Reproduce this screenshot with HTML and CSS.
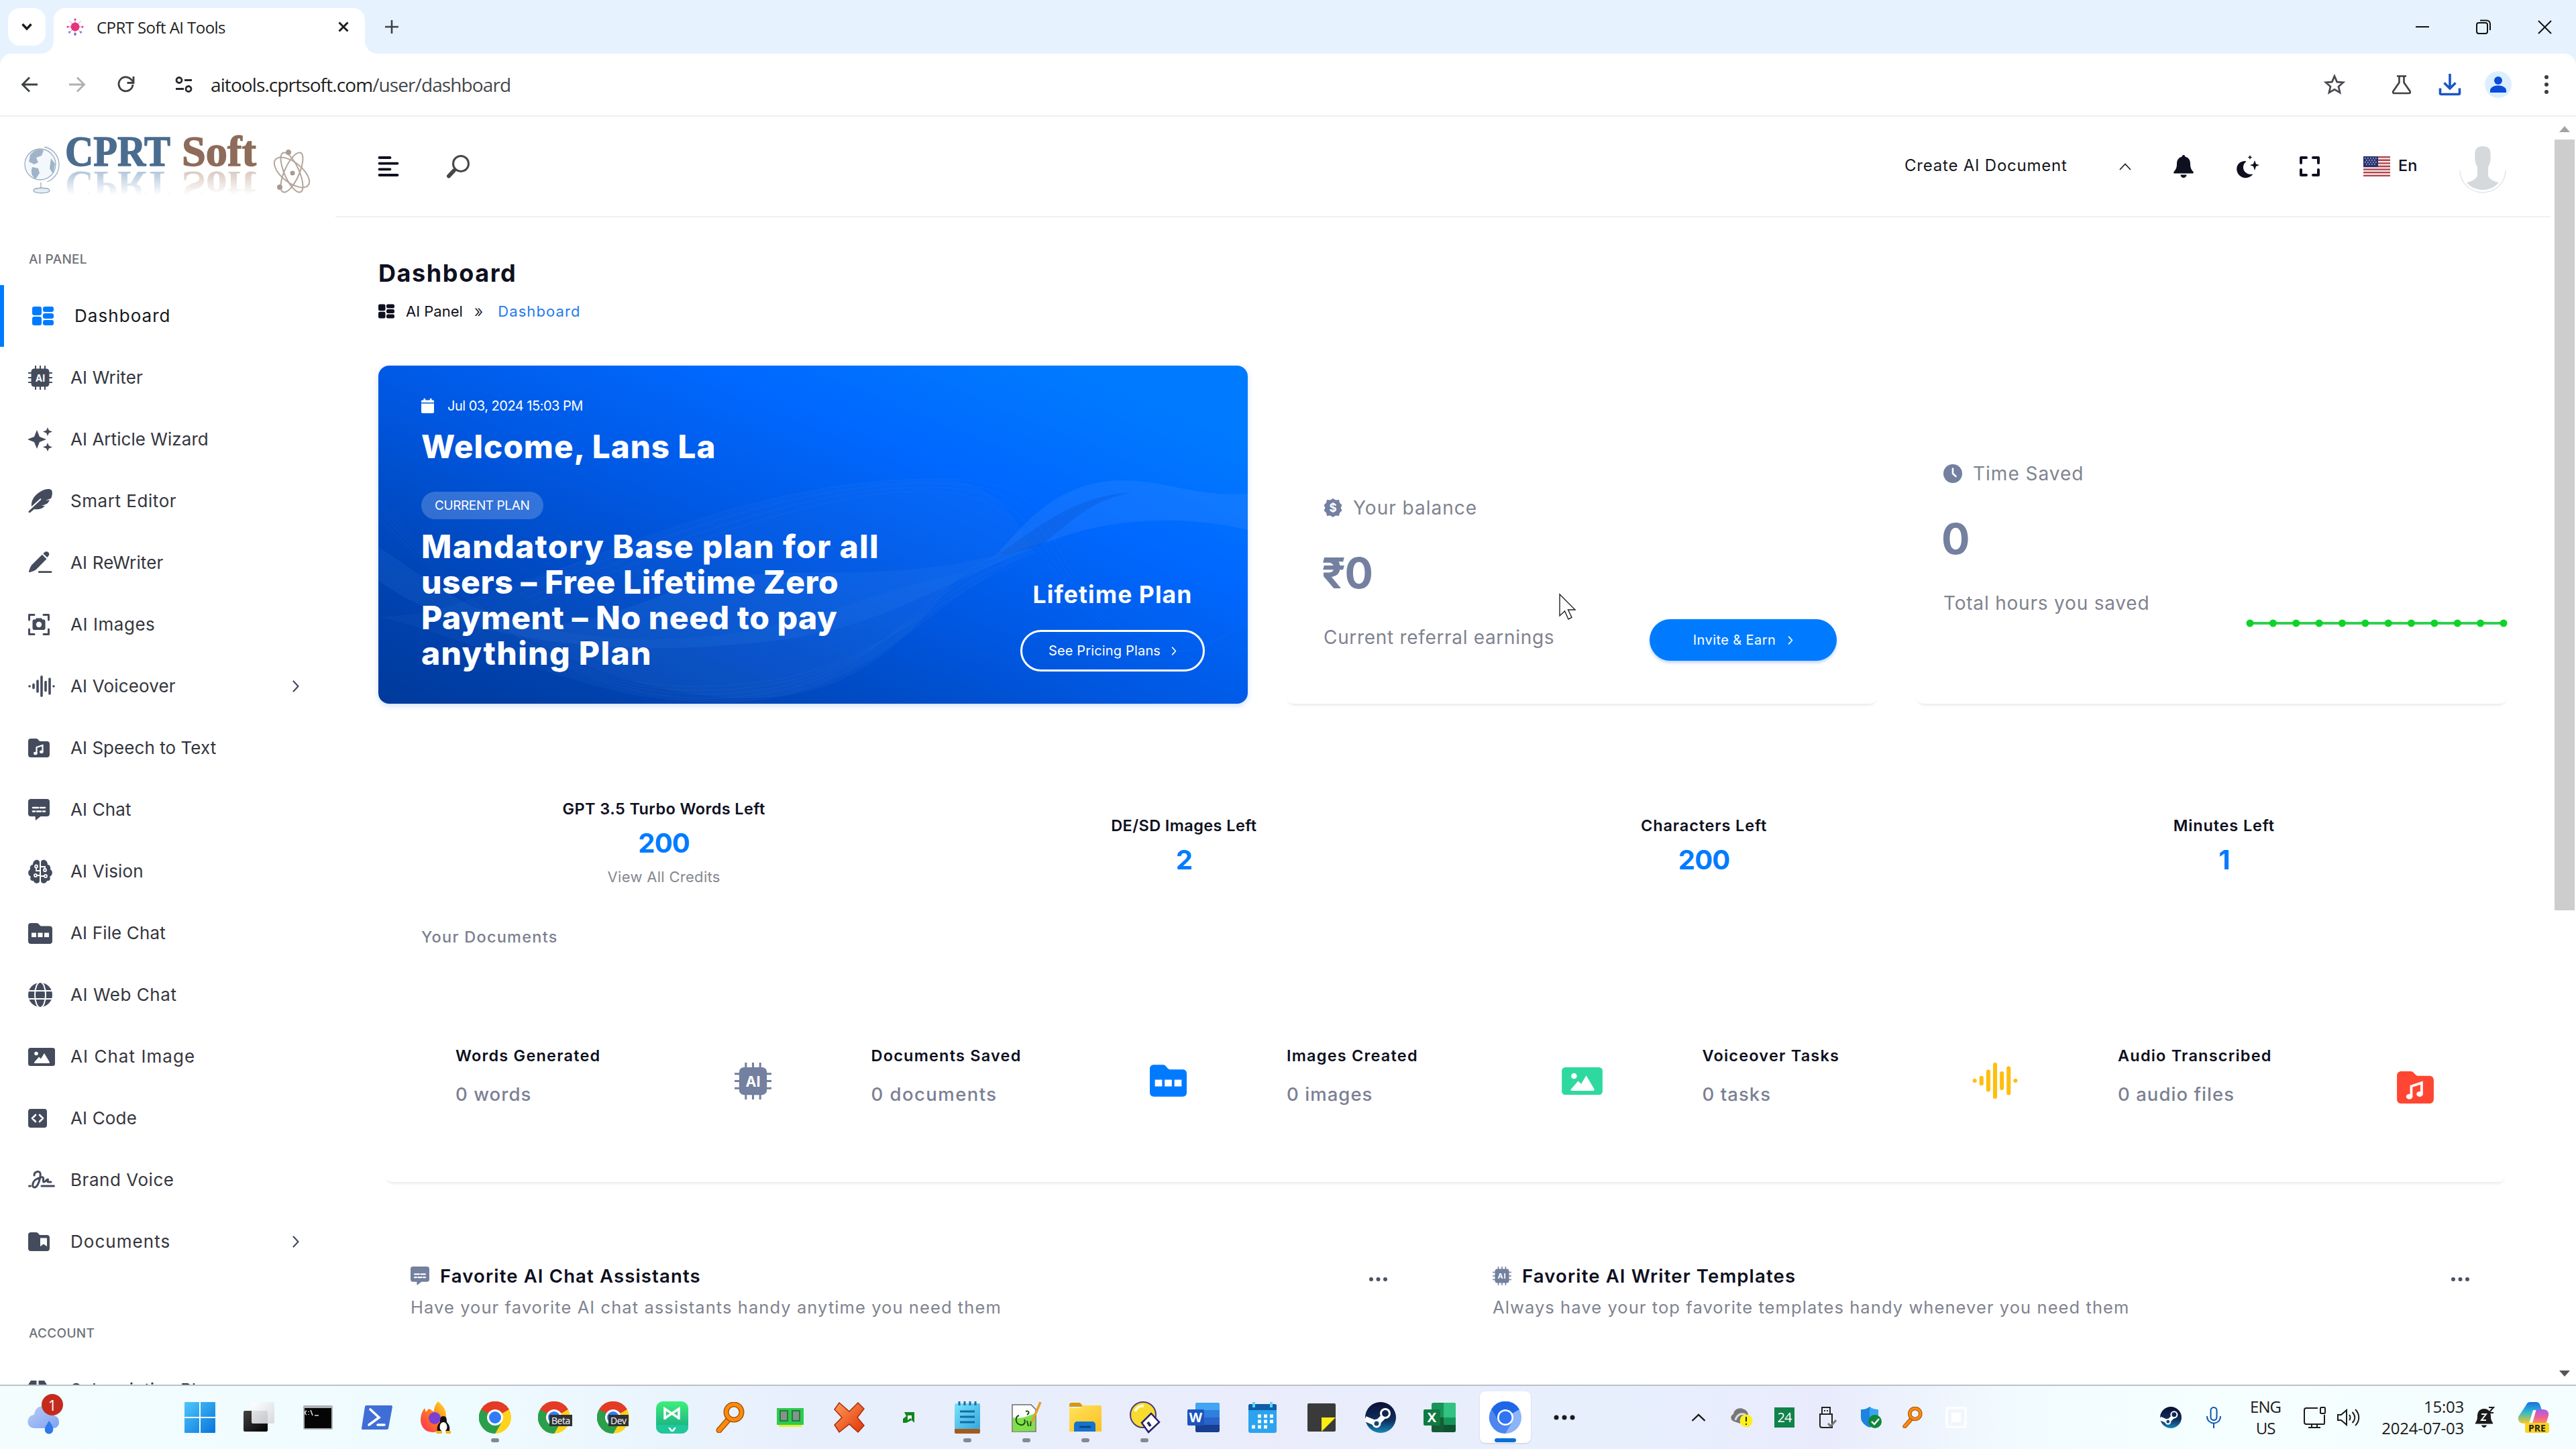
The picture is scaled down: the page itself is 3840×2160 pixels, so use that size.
FILE: index.html
```html
<!DOCTYPE html>
<html lang="en">
<head>
<meta charset="utf-8">
<title>CPRT Soft AI Tools</title>
<link rel="stylesheet" href="styles.css">
</head>
<body>
<svg class="sprite" aria-hidden="true">
  <defs>
    <linearGradient id="g-weather" x1="0" y1="0" x2="1" y2="1"><stop offset="0" stop-color="#b9cdf8"/><stop offset="1" stop-color="#7ea3f0"/></linearGradient>
    <linearGradient id="g-win" x1="0" y1="0" x2="1" y2="1"><stop offset="0" stop-color="#4fc8fb"/><stop offset="1" stop-color="#0673dc"/></linearGradient>
    <linearGradient id="g-black" x1="0" y1="0" x2="1" y2="1"><stop offset="0" stop-color="#444"/><stop offset="1" stop-color="#000"/></linearGradient>
    <linearGradient id="g-grey" x1="0" y1="0" x2="1" y2="1"><stop offset="0" stop-color="#fff"/><stop offset="1" stop-color="#d4d6da"/></linearGradient>
    <linearGradient id="g-fox" x1="1" y1="0" x2="0" y2="1"><stop offset="0" stop-color="#ffe226"/><stop offset=".5" stop-color="#ff7a1c"/><stop offset="1" stop-color="#ff2a5f"/></linearGradient>
    <linearGradient id="g-green" x1="0" y1="0" x2="0" y2="1"><stop offset="0" stop-color="#3df07a"/><stop offset="1" stop-color="#12a386"/></linearGradient>
    <linearGradient id="g-note" x1="0" y1="0" x2="1" y2="1"><stop offset="0" stop-color="#7be3fb"/><stop offset="1" stop-color="#35a6dd"/></linearGradient>
    <linearGradient id="g-folder" x1="0" y1="0" x2="1" y2="1"><stop offset="0" stop-color="#ffe35a"/><stop offset="1" stop-color="#fbc024"/></linearGradient>
    <linearGradient id="g-steam" x1="0" y1="0" x2="0" y2="1"><stop offset="0" stop-color="#0a0f33"/><stop offset=".6" stop-color="#0f2f60"/><stop offset="1" stop-color="#1588b8"/></linearGradient>
    <linearGradient id="g-red" x1="0" y1="0" x2="1" y2="1"><stop offset="0" stop-color="#ff9a55"/><stop offset="1" stop-color="#e03508"/></linearGradient>
    <linearGradient id="g-cop1" x1="0" y1="0" x2="0" y2="1"><stop offset="0" stop-color="#1a6fe0"/><stop offset=".45" stop-color="#2bb7d0"/><stop offset="1" stop-color="#f5c928"/></linearGradient>
    <linearGradient id="g-cop2" x1="0" y1="0" x2="0" y2="1"><stop offset="0" stop-color="#a55bf0"/><stop offset=".5" stop-color="#ef5f95"/><stop offset="1" stop-color="#ff9a4d"/></linearGradient>
    <linearGradient id="g-fade" x1="0" y1="0" x2="0" y2="1"><stop offset="0" stop-color="#fff" stop-opacity=".55"/><stop offset="1" stop-color="#fff" stop-opacity="0"/></linearGradient>
    <mask id="m-fade"><rect x="80" y="80" width="320" height="37" fill="url(#g-fade)"/></mask>
  </defs>
  <symbol id="i-grid" viewBox="0 0 32 28"><rect width="14" height="13" rx="3"/><rect y="15" width="14" height="13" rx="3"/><rect x="16" width="16" height="8" rx="3"/><rect x="16" y="10" width="16" height="8" rx="3"/><rect x="16" y="20" width="16" height="8" rx="3"/></symbol>
  <symbol id="i-chip" viewBox="0 0 36 36"><rect x="4.500" y="4.500" width="27" height="27" rx="4.500"/><path d="M11 0v36M18 0v36M25 0v36M0 11h36M0 18h36M0 25h36" stroke="currentColor" stroke-width="2" stroke-linecap="round"/><text x="18" y="23.500" text-anchor="middle" class="chip-text">AI</text></symbol>
  <symbol id="i-spark" viewBox="0 0 36 36"><path d="M13 4l4 10 10 4-10 4-4 10-4-10-10-4 10-4zM29 0l1.900 4.600L36 6.500l-5.100 1.900L29 13l-1.900-4.600L22 6.500l5.100-1.900zM29 23l1.900 4.600L36 29.500l-5.100 1.900L29 36l-1.900-4.600L22 29.500l5.100-1.900z"/></symbol>
  <symbol id="i-feather" viewBox="0 0 36 36"><path d="M5 26C4 16 10 9 18 4c6-4 13-5 16-3 3 2 2 9 0 13l-8 3 6-.5c-1 2-2.500 4-4 5.500l-8 3 5 .0c-4 5-12 6-16 5l-6 5c-1.500 1-3.500-.5-2-2.300L19 16c1-1.500-.5-2.300-1.500-1.300z"/></symbol>
  <symbol id="i-pen" viewBox="0 0 36 36"><path d="M21 5l7 7L12 28c-2 2-7 4-11 5-1 0-1-.5-1-1 1-4 3-9 5-11zM22.500 3.500l2-2c2-2 5-1.500 6.500 0s1.500 4 0 5.500l-2 2.500zM15 31h20a1 1 0 0 1 0 3H15z"/></symbol>
  <symbol id="i-camera" viewBox="0 0 32 32"><path d="M1.500 9V1.500H9M23 1.500h7.500V9M30.500 23v7.500H23M9 30.500H1.500V23" fill="none" stroke="currentColor" stroke-width="3" stroke-linecap="round" stroke-linejoin="round"/><path d="M6.500 11c0-1.700 1-2.500 2.500-2.500h2l1-2h8l1 2h2c1.500 0 2.500.8 2.500 2.500v10.500c0 1.500-1 2.500-2.500 2.500H9c-1.500 0-2.500-1-2.500-2.500z"/><circle cx="16" cy="16" r="4.200" fill="#fff"/></symbol>
  <symbol id="i-wave" viewBox="0 0 40 32"><path d="M2 16h0M8 13.500v5M14 8v16M20 1.800v28.400M26 9.500v13M32 5v22M38 16h0" fill="none" stroke="currentColor" stroke-width="3.600" stroke-linecap="round"/></symbol>
  <symbol id="i-music" viewBox="0 0 32 28"><path d="M0 4c0-2.500 1.500-4 4-4h8c3 0 4 4 6 4h10c2.500 0 4 1.500 4 4v16c0 2.500-1.500 4-4 4H4c-2.500 0-4-1.500-4-4z"/><path d="M12.500 22v-9l9-3v9.500" fill="none" stroke="#fff" stroke-width="2.200"/><ellipse cx="10.800" cy="22" rx="2.800" ry="2.300" fill="#fff"/><ellipse cx="19.800" cy="19.800" rx="2.800" ry="2.300" fill="#fff"/></symbol>
  <symbol id="i-chat" viewBox="0 0 32 32"><path d="M0 4c0-2.500 1.500-4 4-4h24c2.500 0 4 1.500 4 4v18c0 2.500-1.500 4-4 4h-9.500L11 32l-.5-6H4c-2.500 0-4-1.500-4-4z"/><path d="M7 13h8M18 13h7M7 18.500h3M13 18.500h6M22 18.500h3" stroke="#fff" stroke-width="2.600" stroke-linecap="round"/></symbol>
  <symbol id="i-brain" viewBox="0 0 36 36"><path d="M17 4v28c0 5-8 5-9 0-4 1-6-3-4-6-5-2-5-9-1-11-1-4 1-7 4-7 0-9 10-9 10-4zM19 4v28c0 5 8 5 9 0 4 1 6-3 4-6 5-2 5-9 1-11 1-4-1-7-4-7 0-9-10-9-10-4z"/><path d="M17 17h-5v-4M17 24h-5M19 11h6v3M19 25h5" fill="none" stroke="#fff" stroke-width="1.800"/><g fill="none" stroke="#fff" stroke-width="1.800"><circle cx="12" cy="10.500" r="2"/><circle cx="11" cy="24" r="2"/><circle cx="25" cy="16" r="2"/><circle cx="26" cy="25" r="2"/></g></symbol>
  <symbol id="i-files" viewBox="0 0 36 31"><path d="M0 4c0-2.500 1.500-4 4-4h9c3 0 4 4.500 6.500 4.500H32c2.500 0 4 1.500 4 4V27c0 2.500-1.500 4-4 4H4c-2.500 0-4-1.500-4-4z"/><path d="M5 14.500h7v6.500H5zM14.500 14.500h7v6.500h-7zM24 14.500h7v6.500h-7z" fill="#fff"/></symbol>
  <symbol id="i-globe" viewBox="0 0 36 36"><circle cx="18" cy="18" r="18"/><path d="M0 12h36M0 24h36" stroke="#fff" stroke-width="2"/><ellipse cx="18" cy="18" rx="8" ry="19" fill="none" stroke="#fff" stroke-width="2"/></symbol>
  <symbol id="i-image" viewBox="0 0 40 27"><rect width="40" height="27" rx="3.500"/><circle cx="12" cy="8.500" r="2.800" fill="#fff"/><path d="M9 21.500l7-8 3 2.800L24 8l8 13.500c0 1-.5 1.500-1.500 1.500H10c-1 0-1.500-.8-1-1.500z" fill="#fff"/></symbol>
  <symbol id="i-code" viewBox="0 0 28 28"><rect width="28" height="28" rx="4"/><path d="M11 9l-5 5 5 5M17 9l5 5-5 5" fill="none" stroke="#fff" stroke-width="2.600" stroke-linecap="round" stroke-linejoin="round"/></symbol>
  <symbol id="i-sign" viewBox="0 0 40 28"><path d="M1.500 23h2M9 7c0-6 8-7 9-3 1 5-3 20-8 21-5 1-4-9 2-12 4-2 8-4 10-3 2 1-1 6 1 7s4-4 6-4-2 4 1 4h4M20 23h18.500" fill="none" stroke="currentColor" stroke-width="3" stroke-linecap="round" stroke-linejoin="round"/></symbol>
  <symbol id="i-docs" viewBox="0 0 32 28"><path d="M0 4c0-2.500 1.500-4 4-4h8c3 0 4 4 6 4h10c2.500 0 4 1.500 4 4v16c0 2.500-1.500 4-4 4H4c-2.500 0-4-1.500-4-4z"/><path d="M18 8.500h10V21l-5-3.500-5 3.500z" fill="#fff"/></symbol>
  <symbol id="i-right" viewBox="0 0 10 18"><path d="M1.500 1.500L8.500 9l-7 7.500" fill="none" stroke="currentColor" stroke-width="2.200" stroke-linecap="round" stroke-linejoin="round"/></symbol>
  <symbol id="i-mag" viewBox="0 0 46 46"><path d="M19 26L5 42" stroke="#a85508" stroke-width="9" stroke-linecap="round"/><path d="M19 26L5 42" stroke="#ff8a0c" stroke-width="6" stroke-linecap="round"/><circle cx="27" cy="15" r="11.500" fill="none" stroke="#a85508" stroke-width="8"/><circle cx="27" cy="15" r="11.500" fill="none" stroke="#ff8a0c" stroke-width="5"/></symbol>
  <symbol id="i-chrome" viewBox="0 0 48 48"><circle cx="24" cy="24" r="24" fill="#ffd21c"/><path d="M24 24L3.200 12A24 24 0 0 1 44.800 12z" fill="#e33b26"/><path d="M24 12h20.800A24 24 0 0 0 3.200 12L14 30z" fill="#e33b26"/><path d="M3.200 12A24 24 0 0 0 24 48l10.400-18L24 24z" fill="#2a9f4b"/><path d="M3.200 12L14 30a12 12 0 0 0 20 0L24 48A24 24 0 0 1 3.200 12z" fill="#2a9f4b"/><circle cx="24" cy="24" r="12" fill="#fff"/><circle cx="24" cy="24" r="9" fill="#2f7cf6"/></symbol>
  <symbol id="i-steam" viewBox="0 0 46 46"><circle cx="23" cy="23" r="23" fill="url(#g-steam)"/><path d="M0 25l17 7 12-12" fill="none" stroke="#fff" stroke-width="8"/><circle cx="30" cy="17" r="8" fill="#fff"/><circle cx="30" cy="17" r="5" fill="#0f2850"/><circle cx="17" cy="32" r="6.500" fill="#fff"/><circle cx="17" cy="32" r="3.500" fill="#17457a"/></symbol>
</svg>

<header class="browser">
  <div class="tabstrip">
    <div class="tab-search"><svg width="18" height="12" viewBox="0 0 18 12"><path d="M2.500 2L9 9l6.500-7" fill="none" stroke="#1c1c1c" stroke-width="3.400"/></svg></div>
    <div class="tab">
      <svg width="26" height="26" viewBox="0 0 26 26"><g stroke="#ee7dba" stroke-width="1"><path d="M13 1v24M1 13h24M4.500 4.500l17 17M21.500 4.500l-17 17"/></g><g fill="#e2367f"><circle cx="13" cy="13" r="6.500"/><circle cx="13" cy="2" r="1.500"/><circle cx="2" cy="13" r="1.500"/><circle cx="24" cy="13" r="1.500"/></g><circle cx="13" cy="24" r="2" fill="#7f6de0"/><circle cx="4.500" cy="21" r="1.700" fill="#a070e0"/><circle cx="21.500" cy="21" r="1.700" fill="#a070e0"/></svg>
      <span class="tab-title">CPRT Soft AI Tools</span>
      <svg class="tab-close" width="16" height="16" viewBox="0 0 16 16"><path d="M1.500 1.500l13 13M14.500 1.500l-13 13" stroke="#1c1c1c" stroke-width="3"/></svg>
    </div>
    <svg class="tab-new" width="22" height="22" viewBox="0 0 22 22"><path d="M11 1v20M1 11h20" stroke="#3c4043" stroke-width="2.600"/></svg>
    <div class="win-buttons">
      <svg width="20" height="20" viewBox="0 0 20 20"><path d="M0 10h20" stroke="#111" stroke-width="2"/></svg>
      <svg width="22" height="22" viewBox="0 0 22 22"><rect x="1" y="5" width="16" height="16" rx="3" fill="none" stroke="#111" stroke-width="2"/><path d="M6 1.500h10a5 5 0 0 1 5 5V16" fill="none" stroke="#111" stroke-width="2"/></svg>
      <svg width="21" height="21" viewBox="0 0 21 21"><path d="M1 1l19 19M20 1L1 20" stroke="#111" stroke-width="2"/></svg>
    </div>
  </div>
  <div class="toolbar">
    <svg class="tb-back" width="24" height="24" viewBox="0 0 24 24"><path d="M24 12H2M12 1.500L1.500 12 12 22.500" fill="none" stroke="#3c4043" stroke-width="2.800"/></svg>
    <svg class="tb-fwd" width="24" height="24" viewBox="0 0 24 24"><path d="M0 12h22M12 1.500L22.500 12 12 22.500" fill="none" stroke="#adb0b3" stroke-width="2.800"/></svg>
    <svg class="tb-reload" width="26" height="26" viewBox="0 0 26 26"><path d="M23 13a10.500 10.500 0 1 1-3-8l4 4" fill="none" stroke="#3c4043" stroke-width="2.800"/><path d="M24 1v9.500h-9.500" fill="none" stroke="#3c4043" stroke-width="2.800"/></svg>
    <svg class="tb-tune" width="26" height="26" viewBox="0 0 26 26"><g fill="none" stroke="#26282b" stroke-width="2.800"><circle cx="6" cy="6.500" r="4"/><circle cx="20" cy="19.500" r="4"/><path d="M14 6.500h11M1 19.500h12"/></g></svg>
    <span class="url">aitools.cprtsoft.com<span class="url-path">/user/dashboard</span></span>
    <div class="tb-right">
      <svg class="tb-star" width="32" height="32" viewBox="0 0 32 32"><path d="M16 3.500l3.700 8.600 9.300.8-7 6.100 2.100 9.100L16 23.300l-8.100 4.800L10 19l-7-6.100 9.300-.8z" fill="none" stroke="#46494d" stroke-width="2.700"/></svg>
      <svg class="tb-flask" width="30" height="30" viewBox="0 0 30 30"><path d="M8 2.500h14M11.500 3v9L2.500 25c-1 2 0 3 1.500 3h22c1.500 0 2.500-1 1.500-3l-9-13V3" fill="none" stroke="#3c4043" stroke-width="2.600"/></svg>
      <svg class="tb-down" width="32" height="32" viewBox="0 0 32 32"><path d="M16 0v21M7.500 13.500l8.500 8.500 8.500-8.500M1.500 21.500V29c0 1 .5 1.500 1.500 1.500h26c1 0 1.500-.5 1.500-1.500v-7.500" fill="none" stroke="#1a56c4" stroke-width="3.600"/></svg>
      <svg class="tb-user" width="40" height="40" viewBox="0 0 40 40"><circle cx="20" cy="20" r="20" fill="#dcefff"/><circle cx="20" cy="14" r="6" fill="#0b4cdb"/><path d="M8 32v-3c0-10 24-10 24 0v3z" fill="#0b4cdb"/></svg>
      <svg class="tb-dots" width="6" height="28" viewBox="0 0 6 28"><g fill="#3c4043"><circle cx="3" cy="3" r="3"/><circle cx="3" cy="14" r="3"/><circle cx="3" cy="25" r="3"/></g></svg>
    </div>
  </div>
</header>

<div class="page">
  <aside class="sidebar">
    <svg class="logo" width="500" height="148" viewBox="0 0 500 148">
      <g fill="none" stroke="#9aadc2" stroke-width="1.300"><circle cx="60" cy="71" r="23" fill="#f3f8fc"/><path d="M66 45a27 27 0 0 1 4 52"/><path d="M61 98v9M50 110c0-5 24-5 24 0s-24 5-24 0z" fill="#e6edf3"/></g>
      <path d="M45 57c6-8 14-10 20-7l-3 8-8 3 3 7-6 3-8-4zM48 75l9 2 2 7-6 9c-5-4-8-10-5-18zM76 62l6 8-3 15-5-8z" fill="#9fb3c9"/>
      <g class="logo-text"><text x="97" y="73" textLength="157" lengthAdjust="spacingAndGlyphs" fill="#4a6c8f" stroke="#4a6c8f">CPRT</text><text x="271" y="73" textLength="111" lengthAdjust="spacingAndGlyphs" fill="#8e6b5a" stroke="#8e6b5a">Soft</text></g>
      <g mask="url(#m-fade)"><g class="logo-text" transform="translate(0 156) scale(1 -1)"><text x="97" y="74" textLength="157" lengthAdjust="spacingAndGlyphs" fill="#6f94ba">CPRT</text><text x="271" y="74" textLength="111" lengthAdjust="spacingAndGlyphs" fill="#b99a8a">Soft</text></g></g>
      <g fill="none" stroke="#b3a59c" stroke-width="2"><ellipse cx="435" cy="83" rx="11" ry="32" transform="rotate(24 435 83)"/><ellipse cx="435" cy="83" rx="11" ry="32" transform="rotate(-24 435 83)"/><ellipse cx="435" cy="83" rx="31" ry="15" transform="rotate(38 435 83)"/></g>
      <g fill="#a79a92"><circle cx="436" cy="84" r="3.500"/><circle cx="430" cy="53" r="4"/><circle cx="417" cy="105" r="4"/></g>
    </svg>
    <nav class="nav">
      <h2 class="nav-label">AI PANEL</h2>
      <a class="nav-item is-active"><svg class="nav-icon" width="32" height="28"><use href="#i-grid"/></svg><span class="wide">Dashboard</span></a>
      <a class="nav-item"><svg class="nav-icon" width="36" height="36"><use href="#i-chip"/></svg><span>AI Writer</span></a>
      <a class="nav-item"><svg class="nav-icon" width="36" height="36"><use href="#i-spark"/></svg><span class="tight">AI Article Wizard</span></a>
      <a class="nav-item"><svg class="nav-icon" width="36" height="36"><use href="#i-feather"/></svg><span class="mid">Smart Editor</span></a>
      <a class="nav-item"><svg class="nav-icon" width="36" height="34"><use href="#i-pen"/></svg><span>AI ReWriter</span></a>
      <a class="nav-item"><svg class="nav-icon" width="32" height="32"><use href="#i-camera"/></svg><span class="mid">AI Images</span></a>
      <a class="nav-item"><svg class="nav-icon" width="40" height="32"><use href="#i-wave"/></svg><span>AI Voiceover</span><svg class="nav-more" width="10" height="18"><use href="#i-right"/></svg></a>
      <a class="nav-item"><svg class="nav-icon" width="32" height="28"><use href="#i-music"/></svg><span class="tight">AI Speech to Text</span></a>
      <a class="nav-item"><svg class="nav-icon" width="32" height="32"><use href="#i-chat"/></svg><span>AI Chat</span></a>
      <a class="nav-item"><svg class="nav-icon" width="36" height="36"><use href="#i-brain"/></svg><span>AI Vision</span></a>
      <a class="nav-item"><svg class="nav-icon" width="36" height="31"><use href="#i-files"/></svg><span>AI File Chat</span></a>
      <a class="nav-item"><svg class="nav-icon" width="36" height="36"><use href="#i-globe"/></svg><span class="mid">AI Web Chat</span></a>
      <a class="nav-item"><svg class="nav-icon" width="40" height="27"><use href="#i-image"/></svg><span class="wide">AI Chat Image</span></a>
      <a class="nav-item"><svg class="nav-icon" width="28" height="28"><use href="#i-code"/></svg><span>AI Code</span></a>
      <a class="nav-item"><svg class="nav-icon" width="40" height="28"><use href="#i-sign"/></svg><span class="mid">Brand Voice</span></a>
      <a class="nav-item"><svg class="nav-icon" width="32" height="28"><use href="#i-docs"/></svg><span class="wide">Documents</span><svg class="nav-more" width="10" height="18"><use href="#i-right"/></svg></a>
      <h2 class="nav-label nav-label-next">ACCOUNT</h2>
      <a class="nav-item"><svg class="nav-icon" width="28" height="28" viewBox="0 0 28 28"><path d="M4 0h8.500v28H0V6zM15.500 0H24l4 6v22H15.500z"/></svg><span>Subscription Plans</span></a>
    </nav>
  </aside>

  <main class="main">
    <div class="topbar">
      <svg class="burger" width="30" height="30" viewBox="0 0 30 30"><path d="M1.500 2h16M1.500 10.600h27M1.500 19.300h16M1.500 28h27" stroke="#0e1020" stroke-width="3.800" stroke-linecap="round"/></svg>
      <svg class="search" width="36" height="35" viewBox="0 0 36 35"><circle cx="22" cy="13" r="11.500" fill="none" stroke="#474747" stroke-width="3"/><path d="M13.500 21.500l-2 2" stroke="#474747" stroke-width="3"/><path d="M11.500 23.500L4 31.500" stroke="#474747" stroke-width="6" stroke-linecap="round"/></svg>
      <div class="topbar-right">
        <div class="create"><span>Create AI Document</span><svg width="18" height="11" viewBox="0 0 18 11"><path d="M1 10l8-8.500L17 10" fill="none" stroke="#222" stroke-width="1.800"/></svg></div>
        <svg class="bell" width="30" height="34" viewBox="0 0 30 34"><path d="M15 0c1.500 0 2.300 1 2.300 2.500C23 4 25 8 25 13c0 6 1.500 8.500 4 11.500 1.500 1.600.8 3-1 3H2c-1.800 0-2.500-1.400-1-3C3.500 21.500 5 19 5 13 5 8 7 4 12.700 2.500 12.700 1 13.500 0 15 0zM10.500 29.500h9c0 2.500-2 4.500-4.500 4.500s-4.500-2-4.500-4.500z" fill="#0e1020"/></svg>
        <svg class="moon" width="34" height="34" viewBox="0 0 34 34"><path d="M13 9C4 9-1 16 .5 23.500S9 35 15.500 34c4-.6 7-2.600 9-5.500-8 1.500-14-3-14.500-9.500-.2-4 1.500-7 4.500-9.300z" fill="#0e1020"/><path d="M27 8l2 5.500L34 15l-5 2-2 6-2-6-5-2 5-1.500zM20 0l1 2.500 2.500 1L21 4.500 20 7l-1-2.500-2.500-1 2.500-1z" fill="#0e1020"/></svg>
        <svg class="expand" width="30" height="30" viewBox="0 0 30 30"><path d="M2 10V2h8M20 2h8v8M28 20v8h-8M10 28H2v-8" fill="none" stroke="#0e1020" stroke-width="4" stroke-linecap="round" stroke-linejoin="round"/></svg>
        <svg class="flag" width="40" height="30" viewBox="0 0 40 30"><rect width="40" height="30" fill="#f6ecec"/><path d="M0 1.150h40M0 5.770h40M0 10.400h40M0 15h40M0 19.600h40M0 24.200h40M0 28.850h40" stroke="#b0434a" stroke-width="2.310"/><rect width="22" height="16" fill="#27326f"/><g fill="#cfd5ee"><path d="M2 2h1.500v1.500H2zM6 2h1.500v1.500H6zM10 2h1.500v1.500H10zM14 2h1.500v1.500H14zM18 2h1.500v1.500H18zM4 5h1.500v1.500H4zM8 5h1.500v1.500H8zM12 5h1.500v1.500H12zM16 5h1.500v1.500H16zM2 8h1.500v1.500H2zM6 8h1.500v1.500H6zM10 8h1.500v1.500H10zM14 8h1.500v1.500H14zM18 8h1.500v1.500H18zM4 11h1.500v1.500H4zM8 11h1.500v1.500H8zM12 11h1.500v1.500H12zM16 11h1.500v1.500H16z"/></g></svg>
        <span class="lang">En</span>
        <svg class="avatar" width="72" height="72" viewBox="0 0 72 72"><path d="M2 38a34 33 0 0 0 68 0" fill="none" stroke="#e3e7e9" stroke-width="1.500"/><path d="M36 2c8 0 12 4 11.500 12 1 8-.5 14-3.500 19v11c0 6 7 10 16 12-6 7-14 11-24 11s-18-4-24-11c9-2 16-6 16-12V33c-3-5-4.500-11-3.500-19C24 6 28 2 36 2z" fill="#d5d9dc"/></svg>
      </div>
    </div>

    <div class="content">
      <h1 class="title">Dashboard</h1>
      <div class="crumbs">
        <svg class="crumb-icon" width="24" height="22"><use href="#i-grid"/></svg>
        <span class="crumb-root">AI Panel</span><span class="crumb-sep">»</span><span class="crumb-here">Dashboard</span>
      </div>

      <section class="cards">
        <article class="welcome">
          <svg class="welcome-art" viewBox="0 0 1296 504" preserveAspectRatio="none">
            <path d="M916 287C960 240 1010 171 1110 171c60 0 110 25 186 20v54c-90-22-200-20-290 15z" fill="#5aa2ff" opacity=".17"/>
            <path d="M916 287c60-40 120-95 210-98-70 10-110 60-140 80z" fill="#003fae" opacity=".2"/>
            <path d="M0 270c90 60 150 110 240 115 120 5 190-70 340-75 130-5 230 10 430-50-170 60-250 130-420 150-240 30-470 0-590-90z" fill="#4f9bf5" opacity=".1"/>
            <path d="M232 316C420 250 600 169 830 169c110 0 130 90 150 110-150 60-200 170-380 215-230 40-400-70-600-120 100 0 160-40 232-58z" fill="#4b93f0" opacity=".07"/>
            <path d="M870 310c-60 70-130 160-250 180-140 24-330-30-480-130 160 60 330 60 480 20 110-30 180-60 250-70z" fill="#3f88ea" opacity=".09"/>
            <g fill="none" stroke="#79b6ff" opacity=".07"><path d="M200 335C420 240 620 169 830 169s140 100 257 205 170 20 209 10M0 200c120 130 240 290 480 296 280 0 300-160 450-215"/><path d="M210 341C430 250 630 175 825 175s145 104 262 205M0 208c120 130 250 280 480 282 270 0 310-150 460-205"/><path d="M220 347C440 260 640 181 820 181s150 108 267 205M0 216c120 130 260 270 480 268 260 0 320-140 470-195"/><path d="M230 353C450 270 650 187 815 187s155 112 272 205M0 224c120 130 270 260 480 254 250 0 330-130 480-185"/></g>
          </svg>
          <div class="welcome-main">
            <p class="date"><svg width="19" height="22" viewBox="0 0 19 22"><path d="M0 4c0-1 .6-1.500 1.500-1.500h2V0h2.600v2.500h6.800V0h2.600v2.500h2c.9 0 1.500.6 1.500 1.500v2H0zM0 7.500h19V20c0 1.300-.7 2-2 2H2c-1.300 0-2-.7-2-2z"/></svg><span>Jul 03, 2024 15:03 PM</span></p>
            <h2 class="hello">Welcome, Lans La</h2>
            <span class="badge">CURRENT PLAN</span>
            <h3 class="plan"><span class="plan-line">Mandatory Base plan for all</span><br>users – Free Lifetime Zero<br>Payment – No need to pay<br><span class="plan-line">anything Plan</span></h3>
          </div>
          <div class="welcome-side">
            <p class="lifetime">Lifetime Plan</p>
            <a class="pricing"><span>See Pricing Plans</span><svg width="8" height="13" viewBox="0 0 10 18"><use href="#i-right"/></svg></a>
          </div>
        </article>
        <article class="card balance">
          <div>
            <p class="card-label"><svg width="28" height="28" viewBox="0 0 28 28"><path d="M14 0l4 2.500 5-.5 1 4.500 3.500 3.500-2 4 2 4-3.500 3.500-1 4.500-5-.5-4 2.500-4-2.500-5 .5-1-4.500L.5 18l2-4-2-4L4 6.500 5 2l5 .5z"/><text x="14" y="20" text-anchor="middle" class="coin-text">$</text></svg><span>Your balance</span></p>
            <p class="card-value rupee">₹0</p>
            <p class="card-desc tight">Current referral earnings</p>
          </div>
          <a class="invite"><span>Invite &amp; Earn</span><svg width="8" height="13" viewBox="0 0 10 18"><use href="#i-right"/></svg></a>
        </article>
        <article class="card saved">
          <div>
            <p class="card-label"><svg width="28" height="28" viewBox="0 0 28 28"><circle cx="14" cy="14" r="14"/><path d="M14 6.500V14l4.500 4" fill="none" stroke="#fff" stroke-width="2.600" stroke-linecap="round"/></svg><span>Time Saved</span></p>
            <p class="card-value">0</p>
            <p class="card-desc">Total hours you saved</p>
          </div>
          <svg class="spark" width="390" height="12" viewBox="0 0 390 12"><path d="M6 6h378" stroke="#2fd04f" stroke-width="4"/><path d="M6 6h0M40.400 6h0M74.700 6h0M109.100 6h0M143.500 6h0M177.800 6h0M212.200 6h0M246.500 6h0M280.900 6h0M315.300 6h0M349.600 6h0M384 6h0" stroke="#0fd328" stroke-width="11" stroke-linecap="round"/></svg>
        </article>
      </section>

      <section class="usage">
        <div class="credits">
          <div class="credit"><p class="credit-name">GPT 3.5 Turbo Words Left</p><p class="credit-num">200</p><p class="credit-link">View All Credits</p></div>
          <div class="credit"><p class="credit-name">DE/SD Images Left</p><p class="credit-num">2</p></div>
          <div class="credit"><p class="credit-name wide">Characters Left</p><p class="credit-num">200</p></div>
          <div class="credit"><p class="credit-name wide">Minutes Left</p><p class="credit-num">1</p></div>
        </div>
        <h3 class="docs-title">Your Documents</h3>
        <div class="stats">
          <div class="stat"><div><p class="stat-name">Words Generated</p><p class="stat-num">0 words</p></div><svg class="c-slate" width="55" height="55"><use href="#i-chip"/></svg></div>
          <div class="stat"><div><p class="stat-name">Documents Saved</p><p class="stat-num wide">0 documents</p></div><svg class="c-blue" width="55" height="48"><use href="#i-files"/></svg></div>
          <div class="stat"><div><p class="stat-name">Images Created</p><p class="stat-num">0 images</p></div><svg class="c-green" width="61" height="41"><use href="#i-image"/></svg></div>
          <div class="stat"><div><p class="stat-name">Voiceover Tasks</p><p class="stat-num">0 tasks</p></div><svg class="c-yellow" width="68" height="54"><use href="#i-wave"/></svg></div>
          <div class="stat"><div><p class="stat-name">Audio Transcribed</p><p class="stat-num">0 audio files</p></div><svg class="c-red" width="55" height="48"><use href="#i-music"/></svg></div>
        </div>
      </section>

      <section class="favorites">
        <div class="fav"><div><h3 class="fav-title"><svg width="28" height="28"><use href="#i-chat"/></svg><span>Favorite AI Chat Assistants</span></h3><p class="fav-text">Have your favorite AI chat assistants handy anytime you need them</p></div><svg class="fav-more" width="27" height="6" viewBox="0 0 27 6"><g fill="#4c5366"><circle cx="3" cy="3" r="3"/><circle cx="13.500" cy="3" r="3"/><circle cx="24" cy="3" r="3"/></g></svg></div>
        <div class="fav"><div><h3 class="fav-title"><svg width="28" height="28"><use href="#i-chip"/></svg><span>Favorite AI Writer Templates</span></h3><p class="fav-text">Always have your top favorite templates handy whenever you need them</p></div><svg class="fav-more" width="27" height="6" viewBox="0 0 27 6"><g fill="#4c5366"><circle cx="3" cy="3" r="3"/><circle cx="13.500" cy="3" r="3"/><circle cx="24" cy="3" r="3"/></g></svg></div>
      </section>
    </div>
  </main>

  <div class="scrollbar">
    <svg width="16" height="9" viewBox="0 0 16 9"><path d="M8 0l8 9H0z" fill="#a3a3a3"/></svg>
    <div class="thumb"></div>
    <svg class="scroll-down" width="16" height="9" viewBox="0 0 16 9"><path d="M0 0h16L8 9z" fill="#555"/></svg>
  </div>
</div>

<footer class="taskbar">
  <div class="weather"><svg width="60" height="60" viewBox="0 0 60 60"><path d="M12 45C3 45 0 38 2 32s7-7 9-7c1-9 6-13 13-13 9 0 14 6 15 14 7 1 9 5 9 10 0 6-4 9-9 9z" fill="url(#g-weather)"/><path d="M33 34c6 8 7 11 6 15-2 6-10 6-12 0-1-4 1-7 6-15z" fill="#2f78ee"/></svg><span class="count">1</span></div>
  <div class="apps">
    <div class="app"><svg width="46" height="46" viewBox="0 0 46 46"><path d="M0 1.500C0 .5.500 0 1.500 0H22v22H0zM24 0h20.500c1 0 1.500.5 1.500 1.500V22H24zM0 24h22v22H1.500C.5 46 0 45.500 0 44.500zM24 24h22v20.500c0 1-.5 1.500-1.500 1.500H24z" fill="url(#g-win)"/></svg></div>
    <div class="app"><svg width="46" height="46" viewBox="0 0 46 46"><rect y="13" width="36" height="31" rx="2" fill="url(#g-black)"/><rect x="12" width="34" height="32" rx="2" fill="url(#g-grey)" opacity=".9"/></svg></div>
    <div class="app"><svg width="44" height="36" viewBox="0 0 44 36"><rect width="44" height="36" rx="2" fill="#aeb2b6"/><rect x="2" y="4" width="40" height="30" fill="#050505"/><path d="M5 8c-3 1-3 5 0 6M8 9v1M8 13v1M11 7l3 8M17 15h6" fill="none" stroke="#ddd" stroke-width="1.600"/></svg></div>
    <div class="app"><svg width="46" height="36" viewBox="0 0 46 36"><path d="M7 0h37c1.500 0 2 1 2 2l-6 32c0 1-1 2-3 2H1c-1 0-1-1-1-2L5 2c0-1 1-2 2-2z" fill="#3f6fd6"/><path d="M13 6l13 12L11 29M24 29h10" fill="none" stroke="#fff" stroke-width="3.600" stroke-linecap="round"/></svg></div>
    <div class="app"><svg width="46" height="48" viewBox="0 0 46 48"><path d="M26 0c6 6 12 10 12 22 0 14-8 24-20 24C6 46 0 37 0 27c0-6 2-12 6-17l2 6 4-5c4 1 6 4 8 4 0-6 2-10 6-15z" fill="url(#g-fox)"/><circle cx="21" cy="25" r="9" fill="#7b3fd4"/><path d="M34 22c5 0 5 5 5 9 4 4 5 8 4 13H25c-1-5 0-9 4-13 0-4 0-9 5-9z" fill="#111"/><ellipse cx="34" cy="38" rx="5.500" ry="7" fill="#fff"/><path d="M24 44h8v4h-9zM37 44h8v4h-7z" fill="#f0b51d"/></svg></div>
    <div class="app"><svg width="48" height="48"><use href="#i-chrome"/></svg><i class="dot"></i></div>
    <div class="app"><svg width="48" height="48"><use href="#i-chrome"/></svg><b class="tag">Beta</b></div>
    <div class="app"><svg width="48" height="48"><use href="#i-chrome"/></svg><b class="tag">Dev</b></div>
    <div class="app"><svg width="48" height="48" viewBox="0 0 48 48"><rect width="48" height="48" rx="10" fill="url(#g-green)"/><path d="M0 35h48v3a10 10 0 0 1-10 10H10A10 10 0 0 1 0 38z" fill="#1fc79b"/><path d="M13 27V11l21 14M34 27V11L13 25" fill="none" stroke="#fff" stroke-width="3.600"/><path d="M18 39h3l3 4 3-4h3l-4 6h-4z" fill="#fff"/></svg></div>
    <div class="app"><svg width="46" height="46"><use href="#i-mag"/></svg></div>
    <div class="app"><svg width="42" height="30" viewBox="0 0 42 30"><path d="M4 24h34v5H4z" fill="#e6f225"/><path d="M1 1h40v25H1z" fill="#2fc94f"/><path d="M6 5h11v15H6zM24 5h11v15H24z" fill="#85938d" stroke="#0e6f2a" stroke-width="1.500"/></svg></div>
    <div class="app"><svg width="46" height="46" viewBox="0 0 46 46"><path d="M8 1l15 13L36 1l9 9-10 13 10 12-9 10-13-12L8 45 1 34l11-11L1 11z" fill="url(#g-red)" stroke="#a72b0a" stroke-width="1.500"/></svg></div>
    <div class="app"><svg width="17" height="16" viewBox="0 0 17 16"><path d="M2 0h15v16l-4-4-8 4H0v-6l5-4z" fill="#12841f"/><path d="M7 5h6v6l-2-2-4 3z" fill="#fff"/></svg></div>
    <div class="app"><svg width="38" height="48" viewBox="0 0 38 48"><rect y="40" width="38" height="8" rx="2" fill="#a35a1f"/><rect y="3" width="38" height="38" rx="2" fill="url(#g-note)"/><path d="M7 0v6M15 0v6M23 0v6M31 0v6" stroke="#1b6f9b" stroke-width="3"/><path d="M8 15h22M8 23h22M8 31h22" stroke="#0f6da5" stroke-width="3"/></svg><i class="dot"></i></div>
    <div class="app"><svg width="46" height="46" viewBox="0 0 46 46"><path d="M2 4h28l7 7v33H2z" fill="#fdfdfd" stroke="#6b6b6b" stroke-width="1.500"/><path d="M3 23c12 3 22-2 33-6v26L3 44z" fill="#7fe04a"/><path d="M12 20c-6 2-6 12 2 14 6 1 8-4 6-8M22 14c5-2 6 3 2 5M24 28l2 8M30 28l-1 8" fill="none" stroke="#1d4d12" stroke-width="2"/><path d="M44 0L33 26l-2 4" fill="none" stroke="#e0a22c" stroke-width="3.500"/></svg><i class="dot"></i></div>
    <div class="app"><svg width="48" height="46" viewBox="0 0 48 46"><path d="M0 4c0-2 1-3 3-3h13l5 6H0z" fill="#d79a0a"/><path d="M0 9h16l4-4h26c1 0 2 1 2 2v37H0z" fill="url(#g-folder)"/><path d="M7 44V34c0-3 2-5 5-5h22c3 0 5 2 5 5v10z" fill="#1473cc"/><path d="M15 37h17" stroke="#083f7e" stroke-width="2.500"/></svg><i class="dot"></i></div>
    <div class="app"><svg width="48" height="48" viewBox="0 0 48 48"><circle cx="22" cy="20" r="19" fill="#f7db2e" stroke="#4b3a86" stroke-width="2"/><path d="M10 15c2-6 8-9 13-8" fill="none" stroke="#fffbd0" stroke-width="4"/><path d="M34 18l12 13-16 15-10-14z" fill="#fff" stroke="#27226b" stroke-width="2.500"/><path d="M29 31l4 6" stroke="#27226b" stroke-width="4"/></svg><i class="dot"></i></div>
    <div class="app"><svg width="48" height="44" viewBox="0 0 48 44"><rect x="12" width="36" height="44" rx="3" fill="#2a63c9"/><path d="M12 3a3 3 0 0 1 3-3h30a3 3 0 0 1 3 3v8H12z" fill="#41a5f2"/><path d="M12 11h36v11H12z" fill="#2f7fe0"/><path d="M12 33h36v8a3 3 0 0 1-3 3H15a3 3 0 0 1-3-3z" fill="#163f8f"/><rect y="10" width="25" height="24" rx="2" fill="#1c55be"/><text x="12.500" y="29" text-anchor="middle" class="office">W</text></svg></div>
    <div class="app"><svg width="42" height="46" viewBox="0 0 42 46"><rect y="3" width="42" height="43" rx="3" fill="#2ba3ee"/><path d="M0 6a3 3 0 0 1 3-3h36a3 3 0 0 1 3 3v6H0z" fill="#0d5ea8"/><path d="M8 0v8M34 0v8" stroke="#5fd0fa" stroke-width="4"/><path d="M14 21h23M14 29h23M5 37h24" stroke="#fff" stroke-width="5" stroke-dasharray="5 4"/></svg></div>
    <div class="app"><svg width="42" height="42" viewBox="0 0 42 42"><rect width="42" height="42" rx="2" fill="#3a3a3a"/><path d="M21 42V21h21z" fill="#ffee14"/></svg></div>
    <div class="app"><svg width="46" height="46"><use href="#i-steam"/></svg></div>
    <div class="app"><svg width="48" height="44" viewBox="0 0 48 44"><rect x="12" width="36" height="44" rx="3" fill="#18945a"/><path d="M30 0h15a3 3 0 0 1 3 3v19H30z" fill="#32c282"/><path d="M12 22h18v22H15a3 3 0 0 1-3-3z" fill="#145c35"/><path d="M30 33h18v8a3 3 0 0 1-3 3H30z" fill="#0e5430"/><rect y="10" width="25" height="24" rx="2" fill="#107a42"/><text x="12.500" y="29" text-anchor="middle" class="office">X</text></svg></div>
    <div class="app app-active"><svg width="48" height="48" viewBox="0 0 48 48"><circle cx="24" cy="24" r="24" fill="#8db3f8"/><path d="M24 24L3.200 12A24 24 0 0 1 44.800 12z" fill="#1d67e8"/><path d="M24 12h20.800A24 24 0 0 0 3.200 12L14 30z" fill="#1d67e8"/><path d="M3.200 12A24 24 0 0 0 24 48l10.400-18L14 30z" fill="#4d86ee"/><circle cx="24" cy="24" r="12" fill="#fff"/><circle cx="24" cy="24" r="9.500" fill="#2f74f3"/></svg></div>
    <div class="app"><svg width="32" height="8" viewBox="0 0 32 8"><circle cx="4" cy="4" r="3.500"/><circle cx="16" cy="4" r="3.500"/><circle cx="28" cy="4" r="3.500"/></svg></div>
  </div>
  <div class="tray">
    <div class="cell"><svg width="22" height="12" viewBox="0 0 22 12"><path d="M1.500 11L11 1.800 20.500 11" fill="none" stroke="#1b1b1b" stroke-width="2.400"/></svg></div>
    <div class="cell"><svg width="34" height="30" viewBox="0 0 34 30"><path d="M6 21c-6-2-6-9-1-11 1-8 10-11 16-7 5 2 6 6 6 9l-12 12z" fill="#777"/><path d="M8 19c2-8 8-11 15-8" fill="none" stroke="#ddd" stroke-width="3"/><circle cx="24" cy="20" r="9.500" fill="#fbf01a"/><path d="M24 14v7M24 24v2" stroke="#222" stroke-width="2"/></svg></div>
    <div class="cell"><span class="temp">24</span></div>
    <div class="cell"><svg width="26" height="32" viewBox="0 0 26 32"><path d="M5 1h12v10H5zM2 11h18v20H5c-2 0-3-1-3-3z" fill="none" stroke="#222" stroke-width="2"/><path d="M9 5v2M13 5v2" stroke="#222" stroke-width="2"/><path d="M14 25l4 4 8-9" fill="none" stroke="#777" stroke-width="3"/></svg></div>
    <div class="cell"><svg width="34" height="32" viewBox="0 0 34 32"><path d="M16 0c5 4 9 4 13 4v12c0 7-6 12-13 15C9 28 3 23 3 16V4c4 0 8 0 13-4z" fill="#1c84df"/><path d="M16 0v31c7-3 13-8 13-15V4c-4 0-8 0-13-4z" fill="#38a6ef"/><circle cx="24" cy="22" r="10" fill="#12873a"/><path d="M19 22l4 4 7-8" fill="none" stroke="#fff" stroke-width="2.400"/></svg></div>
    <div class="cell"><svg width="32" height="32"><use href="#i-mag"/></svg></div>
    <div class="cell"><svg width="32" height="32" viewBox="0 0 32 32"><rect x="2" y="2" width="28" height="28" fill="none" stroke="#fff" stroke-width="3"/><rect x="9" y="9" width="14" height="14" fill="#fff"/></svg></div>
    <div class="cell cell-gap"><svg width="32" height="32"><use href="#i-steam"/></svg></div>
    <div class="cell"><svg width="22" height="32" viewBox="0 0 22 32"><rect x="6.500" y="1" width="9" height="19" rx="4.500" fill="none" stroke="#0b57b0" stroke-width="2"/><path d="M1 14c0 14 20 14 20 0M11 25v7" fill="none" stroke="#0b57b0" stroke-width="2"/></svg></div>
    <div class="ime">ENG<br>US</div>
    <svg class="net" width="34" height="32" viewBox="0 0 34 32"><path d="M21 2H4C2 2 1 3 1 5v18c0 2 1 3 3 3h26c1 0 1-1 1-2V12M7 31h18M12 26v5M20 26v5" fill="none" stroke="#1b1b1b" stroke-width="2"/><rect x="25" y="1" width="7" height="9" rx="1.500" fill="none" stroke="#1b1b1b" stroke-width="2"/></svg>
    <svg class="vol" width="34" height="28" viewBox="0 0 34 28"><path d="M1 10h5l8-7v22l-8-7H1zM18 10c2 2 2 6 0 8M22.500 6c5 5 5 11 0 16M27 2c7 7 7 17 0 24" fill="none" stroke="#1b1b1b" stroke-width="2"/></svg>
    <div class="clock">15:03<br>2024-07-03</div>
    <svg class="dnd" width="30" height="32" viewBox="0 0 30 32"><path d="M13 3c7 0 10 5 10 11 0 5 1 7 3 10 .5 1 0 1.500-1 1.500H1c-1 0-1.500-.5-1-1.500 2-3 3-5 3-10C3 8 6 3 13 3zM9 27.500h8c-1 4.500-7 4.500-8 0z"/><path d="M9 11h7l-7 9h7" fill="none" stroke="#fff" stroke-width="2"/><path d="M20 1h7l-7 8h7" fill="none" stroke="#1b1b1b" stroke-width="2"/></svg>
    <div class="copilot"><svg width="46" height="34" viewBox="0 0 46 34"><path d="M12 4c1-3 3-4 6-4h9c3 0 5 2 6 6l2 6H22l-6 20H8c-6 0-9-4-8-10z" fill="url(#g-cop1)"/><path d="M28 11h9c6 0 9 4 8 9l-3 10c-1 3-3 4-6 4H17c4 0 4-3 5-6l4-14c.5-2 1-3 2-3z" fill="url(#g-cop2)"/></svg><b class="pre">PRE</b></div>
  </div>
</footer>

<svg class="cursor" width="25" height="39" viewBox="0 0 25 39"><path d="M1 1v32l7.500-7 5.500 12 5-2.500L13.500 24H24z" fill="#fff" stroke="#222" stroke-width="1.400"/></svg>
</body>
</html>
```
FILE: styles.css
```css
* { box-sizing: border-box; }
body { margin: 0; width: 3840px; height: 2160px; overflow: hidden; display: flex; flex-direction: column; background: #fff; font-family: "Inter", "Liberation Sans", sans-serif; color: #0e1020; position: relative; }
h1, h2, h3, p { margin: 0; font-weight: 400; }
svg { display: block; flex: none; overflow: visible; fill: currentColor; }
.sprite { position: absolute; width: 0; height: 0; }
.chip-text { font: 700 14px "Inter", sans-serif; fill: #fff; stroke: none; }
.coin-text { font: 700 17px "Inter", sans-serif; letter-spacing: 0; fill: #fff; }

/* browser chrome */
.browser { font-family: "Open Sans", "Noto Sans", sans-serif; background: #e6f3ff; flex: none; }
.tabstrip { height: 80px; display: flex; align-items: flex-start; padding: 12px 36px 0 12px; }
.tab-search { width: 56px; height: 56px; border-radius: 18px; background: #fff; display: flex; align-items: center; justify-content: center; }
.tab { width: 464px; height: 68px; margin-left: 12px; padding: 0 24px 12px 19px; display: flex; align-items: center; background: #fff; border-radius: 18px 18px 0 0; position: relative; }
.tab::before, .tab::after { content: ""; position: absolute; bottom: 0; width: 18px; height: 18px; }
.tab::before { left: -18px; background: radial-gradient(circle at 0 0, transparent 17.500px, #fff 18px); }
.tab::after { right: -18px; background: radial-gradient(circle at 100% 0, transparent 17.500px, #fff 18px); }
.tab-title { margin: 2px 0 0 19px; font-size: 24px; line-height: 32px; letter-spacing: -.56px; color: #1f1f1f; white-space: nowrap; }
.tab-close { margin-left: auto; }
.tab-new { margin: 17px 0 0 29px; }
.win-buttons { margin: 17px 0 0 auto; display: flex; gap: 70px; align-items: center; }
.toolbar { height: 94px; background: #fff; border-radius: 18px 18px 0 0; border-bottom: 2px solid #eceef0; display: flex; align-items: center; padding: 0 41px 0 32px; }
.tb-fwd { margin-left: 47px; }
.tb-reload { margin-left: 48px; }
.tb-tune { margin-left: 60px; }
.url { margin-left: 27px; font-size: 28px; line-height: 40px; letter-spacing: -.9px; color: #1f1f1f; white-space: nowrap; }
.url-path { color: #45484c; }
.tb-right { margin-left: auto; display: flex; align-items: center; }
.tb-flask { margin-left: 69px; }
.tb-down { margin-left: 41px; }
.tb-user { margin-left: 36px; }
.tb-dots { margin-left: 49px; }

/* page frame */
.page { flex: none; height: 1890px; display: flex; overflow: hidden; }
.sidebar { width: 500px; flex: none; }
.logo-text { font: 700 64px "Liberation Serif", serif; stroke-width: 1.400px; }
.nav { padding-top: 27px; }
.nav-label { height: 76px; line-height: 76px; padding-left: 43px; font-size: 19px; font-weight: 500; letter-spacing: .3px; color: #6f7278; }
.nav-label-next { margin-top: 53px; }
.nav-item { height: 92px; display: flex; align-items: center; padding: 0 54px 0 42px; position: relative; color: #444b5c; white-space: nowrap; }
.nav-item span { font-size: 26px; line-height: 40px; letter-spacing: .15px; color: #34363d; position: absolute; left: 105px; }
.nav-item .tight { letter-spacing: .05px; }
.nav-item .mid { letter-spacing: .55px; }
.nav-item .wide { letter-spacing: 1.050px; }
.nav-more { margin-left: auto; }
.nav .is-active { color: #007bff; padding-left: 42px; border-left: 6px solid #007bff; }
.is-active span { color: #15171c; }

.main { flex: 1; min-width: 0; }
.topbar { height: 150px; border-bottom: 2px solid #eff1f3; display: flex; align-items: center; padding: 0 65px 0 64px; margin-right: 5px; }
.search { margin-left: 71px; }
.topbar-right { margin-left: auto; display: flex; align-items: center; }
.create { width: 338px; display: flex; align-items: center; justify-content: space-between; font-size: 24px; line-height: 32px; letter-spacing: .78px; color: #15171c; }
.create span { margin-top: -2px; }
.bell { margin-left: 63px; }
.moon { margin-left: 64px; }
.expand { margin-left: 60px; }
.flag { margin-left: 65px; }
.lang { margin: -3px 0 0 12px; width: 28px; font-size: 23.500px; font-weight: 500; }
.avatar { margin: 8px 0 0 62px; }

.content { padding: 58px 69px 0 64px; }
.title { font-size: 36px; line-height: 50px; font-weight: 700; letter-spacing: 1.600px; }
.crumbs { height: 40px; margin-top: 12px; display: flex; align-items: center; font-size: 22px; }
.crumb-root { margin-left: 17px; }
.crumb-sep { margin-left: 17px; font-size: 25px; font-weight: 300; }
.crumb-here { margin-left: 22px; color: #1f7cf0; letter-spacing: 1.100px; }

.cards { margin-top: 61px; display: grid; grid-template-columns: 1296px 882px 882px; gap: 57px; height: 504px; }
.welcome { position: relative; border-radius: 16px; padding: 44px 64px 48px; display: flex; justify-content: space-between; color: #fff; background: linear-gradient(22deg, #003a9b 0%, #0044b4 20%, #0057e0 45%, #0068ff 68%, #007bff 90%); box-shadow: 0 3px 8px rgba(0, 100, 230, .2); overflow: hidden; }
.welcome-art { position: absolute; inset: 0; width: 100%; height: 100%; }
.welcome-main, .welcome-side { position: relative; }
.date { display: flex; align-items: center; gap: 20px; font-size: 20px; line-height: 32px; letter-spacing: -.5px; }
.hello { margin-top: 15px; font-size: 47.500px; line-height: 60px; font-weight: 800; letter-spacing: 1.050px; }
.badge { display: block; width: 182px; margin-top: 37px; height: 41px; line-height: 41px; padding-left: 20px; border-radius: 21px; background: rgba(255, 255, 255, .2); font-size: 19px; letter-spacing: -.4px; }
.plan { margin-top: 14px; font-size: 48px; line-height: 53px; font-weight: 800; letter-spacing: .550px; white-space: nowrap; }
.plan-line { letter-spacing: 1.350px; }
.welcome-side { width: 275px; display: flex; flex-direction: column; justify-content: flex-end; align-items: center; }
.lifetime { font-size: 35.500px; line-height: 50px; font-weight: 700; letter-spacing: 1.050px; white-space: nowrap; margin-bottom: 27px; }
.pricing { width: 100%; height: 62px; border: 3px solid #fff; border-radius: 31px; display: flex; align-items: center; justify-content: center; gap: 16px; font-size: 20px; letter-spacing: .16px; }
.card { position: relative; border-radius: 12px; display: flex; justify-content: space-between; box-shadow: 0 5px 4px -3px #e3e8ea; }
.balance { padding: 192px 61px 64px 56px; }
.saved { padding: 141px 0 0 41px; }
.card-label, .card-desc { font-size: 28px; line-height: 40px; letter-spacing: .8px; color: #808390; white-space: nowrap; }
.card-label { display: flex; align-items: center; gap: 16px; letter-spacing: 1px; }
.card-desc.tight { letter-spacing: .68px; }
.card-label svg { color: #73809f; }
.card-value { margin: 42px 0 0 -3px; font-size: 63px; line-height: 70px; font-weight: 700; color: #73809f; }
.rupee { letter-spacing: -1.500px; }
.card-desc { margin-top: 41px; }
.invite { align-self: flex-end; width: 279px; height: 62px; border-radius: 31px; background: #007bff; color: #fff; font-size: 20px; letter-spacing: .41px; display: flex; align-items: center; justify-content: center; gap: 18px; box-shadow: 0 3px 4px rgba(0, 90, 220, .25); }
.spark { margin: 237px 0 0; }

.usage { margin: 56px 3px 0 10px; height: 657px; padding: 71px 0 0; border-radius: 12px; box-shadow: 0 5px 5px -3px #e3e8ea; }
.credits { height: 160px; margin: 0 0 0 28px; width: 3101px; display: grid; grid-template-columns: repeat(4, 1fr); align-items: center; text-align: center; }
.credit p { line-height: 51px; }
.credit-name { font-size: 23.500px; font-weight: 600; letter-spacing: .4px; }
.credit-name.wide { letter-spacing: .85px; }
.credit-num { font-size: 40px; font-weight: 700; color: #007bff; letter-spacing: -.8px; }
.credit-link { font-size: 22px; letter-spacing: .3px; color: #85888f; }
.docs-title { margin: 41px 0 0 54px; line-height: 40px; font-size: 23.500px; font-weight: 500; letter-spacing: 1.250px; color: #7c8090; }
.stats { margin: 137px 0 0 105px; display: grid; grid-template-columns: repeat(5, 619.500px); }
.stat { height: 97px; padding-right: 149px; display: flex; align-items: center; justify-content: space-between; }
.stat svg { margin-top: 17px; }
.stat-name { line-height: 40px; font-size: 23.500px; font-weight: 600; letter-spacing: 1.200px; white-space: nowrap; }
.stat-num { margin-top: 17px; line-height: 40px; font-size: 27.500px; font-weight: 500; letter-spacing: 1.050px; color: #7c8094; }
.stat-num.wide { letter-spacing: 1.450px; }
.c-slate { color: #73809f; }
.c-blue { color: #007bff; }
.c-green { color: #2ed9a0; }
.c-yellow { color: #ffbe0f; }
.stat .c-red { color: #ff4632; margin-top: 37px; }
.favorites { margin: 120px 0 0 48px; display: grid; grid-template-columns: 1456px 1456px; gap: 157px; }
.fav { display: flex; justify-content: space-between; }
.fav-title { display: flex; align-items: center; gap: 16px; line-height: 40px; font-size: 27.500px; font-weight: 600; letter-spacing: 1.150px; }
.fav-title svg { color: #73809f; }
.fav-text { margin-top: 7px; line-height: 40px; font-size: 25.500px; letter-spacing: 1.080px; color: #808390; }
.fav-more { margin-top: 22px; }

.scrollbar { width: 33px; flex: none; display: flex; flex-direction: column; align-items: center; padding: 14px 1px 12px 0; }
.thumb { width: 30px; height: 1149px; margin-top: 11px; background: #cdcdcd; }
.scroll-down { margin-top: auto; }

/* taskbar */
.taskbar { flex: none; height: 96px; border-top: 2px solid #bcc1c8; display: flex; background: linear-gradient(90deg, #f3fdfe 0, #eefbff 700px, #e7effc 1200px, #eaecfb 1900px, #e7effd 2400px, #e9ebfc 2720px, #f1fafe 2980px, #f6ffff 3300px, #f4fdff 3840px); font-family: "Open Sans", "Noto Sans", sans-serif; color: #1b1b1b; }
.weather { width: 254px; flex: none; padding: 18px 0 0 40px; position: relative; }
.count { position: absolute; left: 62px; top: 12px; width: 32px; height: 32px; border-radius: 50%; background: #c42b1c; color: #fff; font-size: 22px; line-height: 32px; text-align: center; }
.apps { display: flex; }
.app { width: 88px; height: 94px; flex: none; display: flex; align-items: center; justify-content: center; position: relative; }
.dot { position: absolute; left: 38px; top: 78px; width: 12px; height: 6px; border-radius: 3px; background: #828994; }
.tag { position: absolute; left: 37px; top: 43px; padding: 0 3px; background: #303235; color: #fff; font-size: 14px; line-height: 17px; font-weight: 400; letter-spacing: -.5px; }
.app-active { width: 76px; margin: 8px 6px 0 16px; height: 77px; background: #fff; border-radius: 8px; box-shadow: 0 1px 2px #c5cbdb; }
.app-active::after { content: ""; position: absolute; left: 22px; bottom: 1px; width: 32px; height: 6px; border-radius: 3px; background: #0b70d6; }
.office { font: 700 20px "Open Sans", sans-serif; fill: #fff; }
.tray { margin-left: 124px; flex: 1; display: flex; align-items: center; }
.cell { width: 64px; flex: none; display: flex; justify-content: center; }
.cell-gap { margin-left: 256px; }
.temp { width: 30px; height: 30px; background: #10824a; color: #fff; font-size: 20px; line-height: 30px; text-align: center; letter-spacing: -1px; }
.ime { width: 90px; text-align: center; font-size: 24px; line-height: 32px; letter-spacing: -1px; }
.net { margin-left: 12px; }
.vol { margin-left: 16px; }
.clock { width: 155px; text-align: right; font-size: 24px; line-height: 32px; letter-spacing: -.25px; }
.dnd { margin-left: 17px; }
.copilot { margin-left: 34px; position: relative; height: 46px; }
.pre { position: absolute; left: 10px; bottom: 0; width: 36px; height: 15px; border-radius: 3px; background: #fbd31c; color: #222; font-size: 14px; line-height: 15px; text-align: center; }

.cursor { position: absolute; left: 2324px; top: 885px; }
```
